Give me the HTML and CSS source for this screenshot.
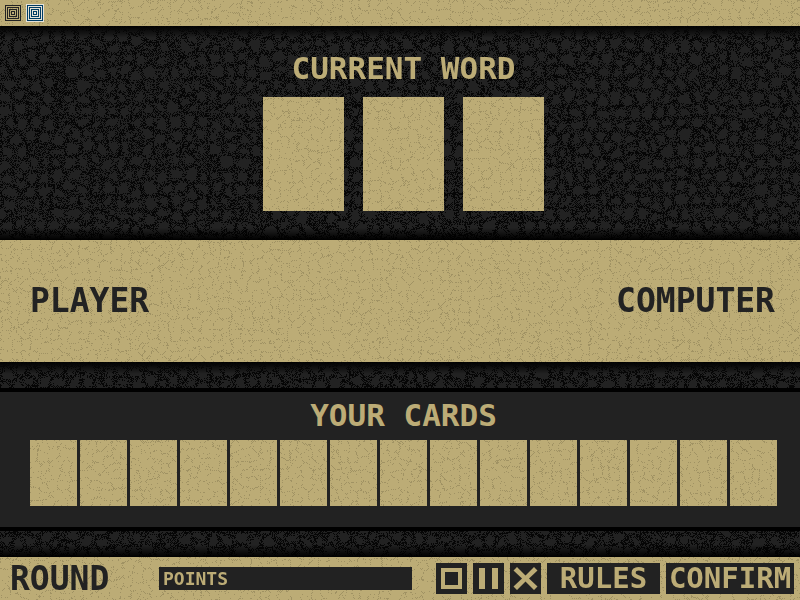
FILE: index.html
```html
<!DOCTYPE html>
<html lang="en">
<head>
<meta charset="utf-8">
<title>Word Cards</title>
<meta name="viewport" content="width=device-width, initial-scale=1">
<link rel="stylesheet" href="styles.css">
</head>
<body>
<header class="topbar sand">
  <button class="theme theme-sand" type="button" aria-label="Sand theme">
    <svg viewBox="0 0 16 16" shape-rendering="crispEdges"><path d="M.5 .5h15v15H.5zM2.5 2.5h11v11h-11zM4.5 4.5h7v7h-7zM6.5 6.5h3v3h-3z"/></svg>
  </button>
  <button class="theme theme-blue" type="button" aria-label="Blue theme">
    <svg viewBox="0 0 16 16" shape-rendering="crispEdges"><path d="M.5 .5h15v15H.5zM2.5 2.5h11v11h-11zM4.5 4.5h7v7h-7zM6.5 6.5h3v3h-3z"/></svg>
  </button>
</header>
<main class="board">
  <section class="word leather shade-top shade-bottom">
    <h1 class="title">CURRENT WORD</h1>
    <div class="slots"><div class="slot sand"></div><div class="slot sand"></div><div class="slot sand"></div></div>
  </section>
  <section class="scores sand">
    <h2 class="name">PLAYER</h2>
    <h2 class="name">COMPUTER</h2>
  </section>
  <div class="strip leather shade-top"></div>
  <section class="hand">
    <h2 class="title">YOUR CARDS</h2>
    <div class="cards">
      <div class="card sand"></div><div class="card sand"></div><div class="card sand"></div><div class="card sand"></div><div class="card sand"></div>
      <div class="card sand"></div><div class="card sand"></div><div class="card sand"></div><div class="card sand"></div><div class="card sand"></div>
      <div class="card sand"></div><div class="card sand"></div><div class="card sand"></div><div class="card sand"></div><div class="card sand"></div>
    </div>
  </section>
  <div class="strip leather shade-bottom"></div>
</main>
<footer class="controls sand">
  <div class="round">ROUND</div>
  <div class="points">POINTS</div>
  <div class="buttons">
    <button class="icon" type="button" aria-label="Stop"><svg viewBox="0 0 31 31" shape-rendering="crispEdges"><path fill-rule="evenodd" d="M5 5h21v21H5zM9 9v13h13V9z"/></svg></button>
    <button class="icon" type="button" aria-label="Pause"><svg viewBox="0 0 31 31" shape-rendering="crispEdges"><path d="M6 5h6v21H6zM19 5h6v21h-6z"/></svg></button>
    <button class="icon" type="button" aria-label="Close"><svg viewBox="0 0 31 31"><path d="M7 4L15.500 12.500 24 4 27.500 7.500 19 15.500 27.500 23.500 24 27 15.500 18.500 7 27 3.500 23.500 12 15.500 3.500 7.500z"/></svg></button>
    <button class="action rules" type="button">RULES</button>
    <button class="action confirm" type="button">CONFIRM</button>
  </div>
</footer>
<script src="texture.js"></script>
</body>
</html>
```
FILE: styles.css
```css
:root {
  --sand: #bcac76;
  --ink: #222222;
}
* { box-sizing: border-box; }
body {
  margin: 0;
  min-height: 100vh;
  display: flex;
  flex-direction: column;
  background: #000;
  color: var(--sand);
  font-family: "DejaVu Sans Mono", monospace;
  font-weight: bold;
}
h1, h2 { margin: 0; font-weight: bold; }
button {
  display: block;
  margin: 0;
  padding: 0;
  border: 0;
  font: inherit;
  color: inherit;
  cursor: pointer;
}
svg { display: block; width: 100%; height: 100%; }
.sand, .leather { position: relative; isolation: isolate; }
.sand { background: var(--sand); color: var(--ink); }
.leather { background: var(--ink); color: var(--sand); }
.grain {
  position: absolute;
  inset: 0;
  z-index: -1;
  pointer-events: none;
}
.shade-top::before, .shade-bottom::after {
  content: "";
  position: absolute;
  left: 0;
  right: 0;
  z-index: -1;
  height: 12px;
}
.shade-top::before { top: 0; background: linear-gradient(#000, transparent); }
.shade-bottom::after { bottom: 0; background: linear-gradient(transparent, #000); }

.topbar { display: flex; gap: 4px; padding: 4px; }
.theme { width: 18px; height: 18px; padding: 1px; background: none; }
.theme path { fill: none; stroke: currentColor; }
.theme-sand { color: var(--ink); }
.theme-blue { color: #003b63; background: #e6e2d6; }

.board { flex: 1; display: flex; flex-direction: column; }
.title { text-align: center; font-size: 31px; line-height: 36px; }
.word { flex: 1; padding: 24px 23px 29px 30px; }
.word .title { margin-bottom: 11px; }
.slots { display: flex; justify-content: center; gap: 19px; }
.slot { width: 81px; height: 114px; }
.scores {
  display: flex;
  justify-content: space-between;
  align-items: center;
  height: 122px;
  padding: 0 25px 0 30px;
}
.name { font-size: 33px; line-height: 40px; }
.strip { height: 26px; }
.hand {
  padding: 5px 23px 21px 30px;
  background: var(--ink);
  border: solid #000;
  border-width: 4px 0;
}
.cards {
  display: grid;
  grid-template-columns: repeat(15, 1fr);
  gap: 3px;
  margin-top: 7px;
}
.card { height: 66px; }

.controls { display: flex; align-items: center; height: 43px; padding: 0 6px 0 10px; }
.round { width: 149px; font-size: 33px; line-height: 36px; }
.points {
  flex: 1;
  margin-right: 24px;
  padding-left: 4px;
  background: var(--ink);
  color: var(--sand);
  font-size: 18px;
  line-height: 23px;
}
.buttons { display: flex; gap: 6px; }
.icon, .action { height: 31px; background: var(--ink); color: var(--sand); }
.icon { width: 31px; fill: currentColor; }
.action { font-size: 29px; line-height: 31px; text-align: center; }
.rules { width: 113px; }
.confirm { width: 128px; }
```
FILE: texture.js
```javascript
// Paints a cracked grain over every sand and leather surface.
function hash(x, y, seed) {
  let h = Math.imul(x, 374761393) ^ Math.imul(y, 668265263) ^ Math.imul(seed, 974711);
  h = Math.imul(h ^ (h >>> 13), 1274126177);
  h = Math.imul(h ^ (h >>> 16), 2246822519);
  return ((h ^ (h >>> 15)) >>> 0) / 4294967296;
}

// Distance to the border between the two nearest cell centres.
function edge(x, y, size) {
  const cx = Math.floor(x / size), cy = Math.floor(y / size);
  let a = 1e9, b = 1e9;
  for (let j = cy - 1; j <= cy + 1; j++) {
    for (let i = cx - 1; i <= cx + 1; i++) {
      const jx = 0.1 + 0.8 * hash(i, j, 1), jy = 0.1 + 0.8 * hash(i, j, 2);
      const d = Math.hypot((i + jx) * size - x, (j + jy) * size - y);
      if (d < a) { b = a; a = d; } else if (d < b) { b = d; }
    }
  }
  return b - a;
}

function sandChance(e, x, y) {
  if (e >= 1.2) return 0.015;
  return (x + y) % 2 ? 0.08 : 0.55;
}

function leatherChance(e, x, y) {
  if (e < 2) return 0.55;
  if (e < 5) return (x + y) % 2 ? 0.15 : 0.62;
  return e < 6 ? 0.12 : 0;
}

function paint(el, color, chance, size) {
  const box = el.getBoundingClientRect();
  const left = Math.round(box.left), top = Math.round(box.top);
  const canvas = document.createElement("canvas");
  canvas.className = "grain";
  canvas.width = Math.round(box.width);
  canvas.height = Math.round(box.height);
  const ctx = canvas.getContext("2d");
  ctx.fillStyle = color;
  for (let y = 0; y < canvas.height; y++) {
    for (let x = 0; x < canvas.width; x++) {
      const px = x + left, py = y + top;
      if (hash(px, py, 3) < chance(edge(px, py, size), px, py)) ctx.fillRect(x, y, 1, 1);
    }
  }
  el.prepend(canvas);
}

document.querySelectorAll(".sand").forEach(el => paint(el, "#a09263", sandChance, 10));
document.querySelectorAll(".leather").forEach(el => paint(el, "#060606", leatherChance, 13));
```
